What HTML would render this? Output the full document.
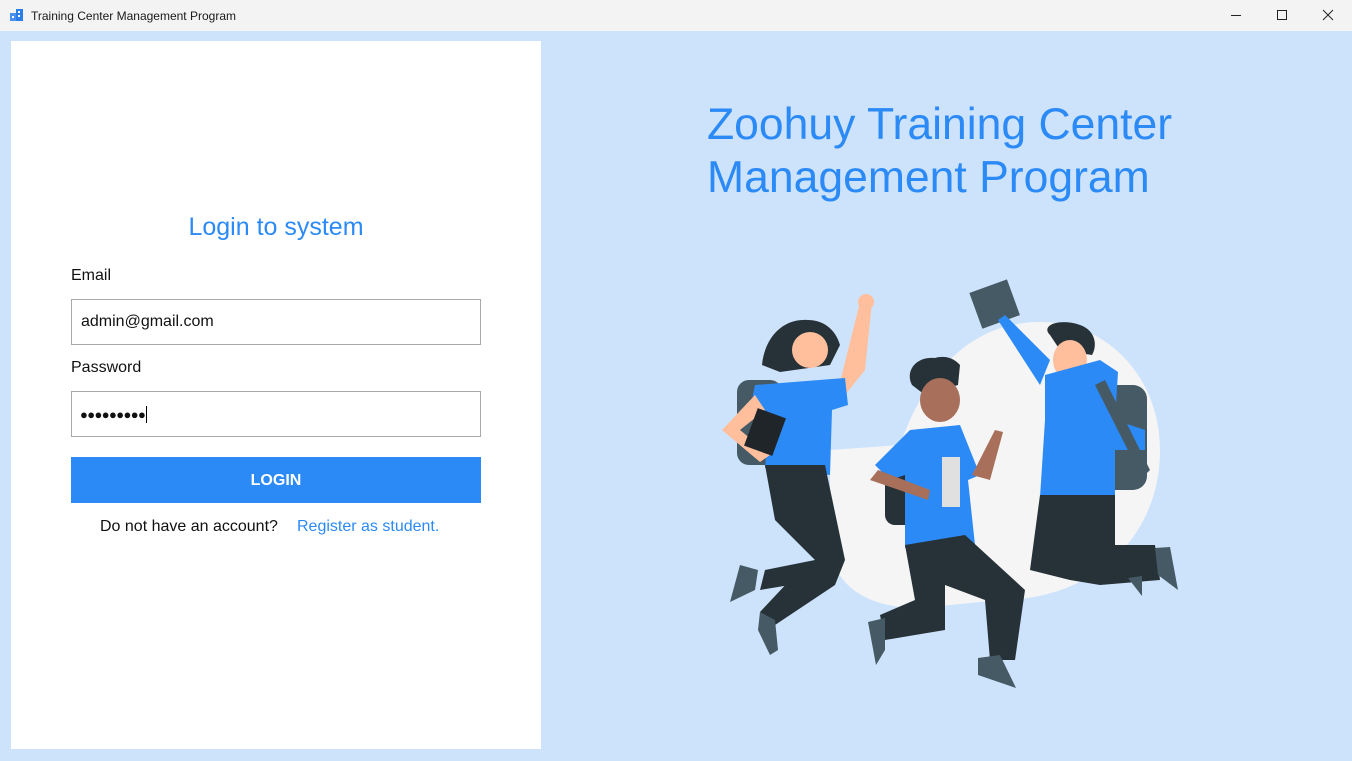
<!DOCTYPE html>
<html><head><style>
*{margin:0;padding:0;box-sizing:border-box}
body{width:1352px;height:761px;overflow:hidden;background:#cde3fb;font-family:"Liberation Sans",Roboto,sans-serif;position:relative}
.tb{position:absolute;left:0;top:0;width:1352px;height:31px;background:#f3f3f3;font-size:12px;color:#1a1a1a}
.tb .t{position:absolute;left:31px;top:9px}
.panel{position:absolute;left:11px;top:41px;width:530px;height:708px;background:#fff}
.abs{position:absolute}
.inp{position:absolute;left:60px;width:410px;height:46px;border:1px solid #a9a9a9;background:#fff;font-size:16px;padding:13px 9px;color:#111}
</style></head><body>
<div class="tb">
<svg class="abs" style="left:10px;top:8px" width="14" height="14"><rect x="0" y="5" width="6" height="8" fill="#4a8ef0"/><rect x="6" y="1" width="7" height="12" fill="#2b7de9"/><rect x="8" y="3" width="2" height="2" fill="#fff"/><rect x="8" y="7" width="2" height="2" fill="#fff"/><rect x="2" y="8" width="2" height="2" fill="#fff"/></svg>
<span class="t">Training Center Management Program</span>
<svg class="abs" style="left:1230px;top:9px" width="12" height="12"><line x1="1" y1="6.5" x2="11" y2="6.5" stroke="#222"/></svg>
<svg class="abs" style="left:1276px;top:9px" width="12" height="12"><rect x="1.5" y="1.5" width="9" height="9" fill="none" stroke="#222"/></svg>
<svg class="abs" style="left:1322px;top:9px" width="12" height="12"><path d="M1 1L11 11M11 1L1 11" stroke="#222"/></svg>
</div>
<div class="panel">
<div class="abs" style="left:0;width:530px;top:172px;text-align:center;font-size:25px;color:#2b8af5">Login to system</div>
<div class="abs" style="left:60px;top:226px;font-size:16px;color:#111">Email</div>
<div class="inp" style="top:258px">admin@gmail.com</div>
<div class="abs" style="left:60px;top:318px;font-size:16px;color:#111">Password</div>
<div class="inp" style="top:350px;font-size:13px;padding-top:14px;padding-left:8px;letter-spacing:-0.6px">●●●●●●●●●<span style="border-left:1px solid #000;margin-left:1px;font-size:16px"></span></div>
<div class="abs" style="left:60px;top:416px;width:410px;height:46px;background:#2b8af5;color:#fff;font-weight:bold;font-size:16px;text-align:center;line-height:48px">LOGIN</div>
<div class="abs" style="left:89px;top:477px;font-size:16px;color:#111">Do not have an account?</div>
<div class="abs" style="left:286px;top:477px;font-size:16px;color:#2b8af5">Register as student.</div>
</div>
<div class="abs" style="left:707px;top:98px;font-size:44.5px;line-height:53px;color:#2b8af5">Zoohuy Training Center<br>Management Program</div>
<svg class="abs" style="left:0;top:0" width="1352" height="761">
<path d="M1040 322C1110 322 1160 380 1160 450C1160 540 1090 600 1000 600L920 608C860 608 830 580 830 540L830 450L900 445C930 360 980 322 1040 322Z" fill="#f5f5f5"/>
<rect x="737" y="380" width="45" height="85" rx="12" fill="#455a64"/>
<path d="M808 320C785 318 765 335 762 365L780 372L830 365L840 345C835 328 822 320 808 320Z" fill="#263238"/>
<circle cx="810" cy="350" r="18" fill="#ffbf9d"/>
<path d="M838 390L860 302L872 302L865 370L845 395Z" fill="#ffbf9d"/>
<circle cx="866" cy="302" r="8" fill="#ffbf9d"/>
<path d="M755 385L845 378L848 405L832 410L830 475L765 468L770 415L750 410Z" fill="#2b8af5"/>
<path d="M755 395L722 430L760 462L770 455L740 430L765 410Z" fill="#ffbf9d"/>
<rect x="750" y="412" width="30" height="40" fill="#1f2529" transform="rotate(20 765 432)"/>
<path d="M765 465L825 465L845 560L835 585L790 585L760 590L765 570L815 560L775 520Z" fill="#263238"/>
<path d="M790 580L835 585L775 625L760 612Z" fill="#263238"/>
<path d="M740 565L758 570L755 590L730 602Z" fill="#455a64"/>
<path d="M760 612L775 620L778 650L770 655L758 630Z" fill="#455a64"/>
<rect x="885" y="460" width="40" height="65" rx="10" fill="#263238"/>
<path d="M935 358C915 356 905 372 912 385L925 395L958 385L960 365C952 356 942 356 935 358Z" fill="#263238"/>
<ellipse cx="940" cy="400" rx="20" ry="22" fill="#a86f5a"/>
<path d="M910 430L960 425L980 475L968 480L975 545L905 548L905 475L890 480L875 465Z" fill="#2b8af5"/>
<rect x="942" y="457" width="18" height="50" fill="#e0e0e0"/>
<path d="M972 475L995 430L1003 432L990 480Z" fill="#a86f5a"/>
<path d="M870 480L878 470L930 490L928 500Z" fill="#a86f5a"/>
<path d="M905 545L965 535L1025 590L1015 660L990 660L985 600L945 585L945 630L885 640L880 615L915 600Z" fill="#263238"/>
<path d="M868 622L885 618L885 650L876 665Z" fill="#455a64"/>
<path d="M978 658L1000 655L1016 688L978 675Z" fill="#455a64"/>
<rect x="1090" y="385" width="57" height="105" rx="14" fill="#455a64"/>
<rect x="975" y="285" width="40" height="38" fill="#455a64" transform="rotate(-20 995 305)"/>
<path d="M998 320L1005 315L1050 360L1040 385Z" fill="#2b8af5"/>
<path d="M1050 335C1040 325 1060 318 1080 325C1095 330 1098 345 1092 355L1060 350Z" fill="#263238"/>
<ellipse cx="1070" cy="360" rx="17" ry="20" fill="#ffbf9d"/>
<path d="M1045 375L1100 360L1118 372L1115 420L1145 430L1145 450L1115 450L1115 497L1040 497L1045 420Z" fill="#2b8af5"/>
<path d="M1095 385L1105 380L1150 470L1142 478Z" fill="#455a64"/>
<path d="M1040 495L1115 495L1115 545L1155 545L1160 580L1100 585L1070 580L1030 570Z" fill="#263238"/>
<path d="M1155 548L1170 547L1178 590L1158 575Z" fill="#455a64"/>
<path d="M1128 578L1142 576L1142 596Z" fill="#455a64"/>
</svg>
</body></html>
